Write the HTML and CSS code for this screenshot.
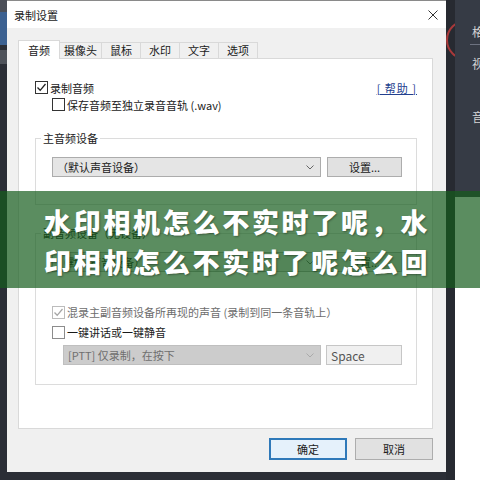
FILE: index.html
```html
<!DOCTYPE html>
<html lang="zh-CN">
<head>
  <meta charset="UTF-8">
  <meta name="viewport" content="width=device-width, initial-scale=1.0">
  <title>录制设置</title>
  <link rel="stylesheet" href="styles.css">
</head>
<body>
  <div class="screen">
    <!-- 左侧背景窗口 -->
    <div class="side-left">
      <div class="sl-top"></div>
      <div class="sl-blue"></div>
      <div class="sl-gray"></div>
    </div>

    <!-- 对话框 -->
    <div class="dialog">
      <div class="titlebar">
        <span>录制设置</span>
        <svg class="close" width="10" height="10" viewBox="0 0 10 10">
          <path d="M0.5 0.5 L9.5 9.5 M9.5 0.5 L0.5 9.5" stroke="#333" stroke-width="1" fill="none"/>
        </svg>
      </div>

      <div class="dlg-body">
        <div class="tabs">
          <div class="tab active">音频</div>
          <div class="tab">摄像头</div>
          <div class="tab">鼠标</div>
          <div class="tab">水印</div>
          <div class="tab">文字</div>
          <div class="tab">选项</div>
        </div>

        <div class="panel">
          <div class="check-row">
            <span class="box">
              <svg width="11" height="11" viewBox="0 0 11 11"><path d="M1.5 5.5 L4.2 8.3 L9.5 2" stroke="#222" stroke-width="1.3" fill="none"/></svg>
            </span>
            <span>录制音频</span>
            <span class="help">[&nbsp;帮助&nbsp;]</span>
          </div>
          <div class="check-row sub">
            <span class="box"></span>
            <span>保存音频至独立录音音轨 (.wav)</span>
          </div>

          <fieldset class="group g1">
            <legend>主音频设备</legend>
            <div class="device-row">
              <div class="select">
                <span>（默认声音设备）</span>
                <svg width="8" height="5" viewBox="0 0 8 5"><path d="M0.5 0.5 L4 4 L7.5 0.5" stroke="#666" fill="none"/></svg>
              </div>
              <div class="btn">设置...</div>
            </div>
          </fieldset>

          <fieldset class="group g2">
            <legend>副音频设备（无设备）</legend>
            <div class="device-row">
              <div class="select">
                <span>（默认声音设备）</span>
                <svg width="8" height="5" viewBox="0 0 8 5"><path d="M0.5 0.5 L4 4 L7.5 0.5" stroke="#666" fill="none"/></svg>
              </div>
              <div class="btn">设置...</div>
            </div>

            <div class="check-row mix">
              <span class="box disabled">
                <svg width="11" height="11" viewBox="0 0 11 11"><path d="M1.5 5.5 L4.2 8.3 L9.5 2" stroke="#a6a6a6" stroke-width="1.3" fill="none"/></svg>
              </span>
              <span class="gray">混录主副音频设备所再现的声音 (录制到同一条音轨上）</span>
            </div>
            <div class="check-row ptt">
              <span class="box soft"></span>
              <span>一键讲话或一键静音</span>
            </div>
            <div class="ptt-row">
              <div class="select off">
                <span>[PTT] 仅录制，在按下</span>
                <svg width="8" height="5" viewBox="0 0 8 5"><path d="M0.5 0.5 L4 4 L7.5 0.5" stroke="#aaa" fill="none"/></svg>
              </div>
              <div class="key-input">Space</div>
            </div>
          </fieldset>
        </div>

        <div class="actions">
          <div class="btn primary">确定</div>
          <div class="btn">取消</div>
        </div>
      </div>
    </div>

    <!-- 右侧背景窗口 -->
    <div class="gap-strip">
      <svg width="9" height="80" viewBox="0 0 9 80">
        <circle cx="20" cy="40" r="19" stroke="#a8393a" stroke-width="2" fill="none"/>
      </svg>
    </div>
    <div class="side-right">
      <div class="dark-panel">
        <div class="dp-item">格</div>
        <div class="dp-line"></div>
        <div class="dp-item">视</div>
        <div class="dp-item last">音</div>
      </div>
    </div>

    <!-- 标题横幅 -->
    <div class="banner">
      <div class="banner-text">水印相机怎么不实时了呢，水印相机怎么不实时了呢怎么回事</div>
    </div>
  </div>
</body>
</html>
```

FILE: styles.css
```css
* {
  box-sizing: border-box;
}

body {
  margin: 0;
  font-family: "Noto Sans CJK SC", "Noto Sans", sans-serif;
  font-size: 11px;
  color: #1a1a1a;
}

.screen {
  position: relative;
  width: 480px;
  height: 480px;
  display: flex;
  background: #2b2e36;
  overflow: hidden;
}

.screen > div {
  flex: none;
  min-width: 0;
}

/* 左侧 */
.side-left {
  width: 7px;
  display: flex;
  flex-direction: column;
}

.sl-top {
  height: 12px;
  background: #4b4f58;
}

.sl-blue {
  height: 33px;
  background: #3c6191;
}

.sl-gray {
  height: 14px;
  margin-top: 5px;
  background: #4e525a;
}

/* 对话框 */
.dialog {
  width: 439px;
  height: 472px;
  display: flex;
  flex-direction: column;
  background: #f0f0f0;
  border-top: 1px solid #8a8a8a;
}

.titlebar {
  height: 27px;
  background: #fff;
  display: flex;
  align-items: center;
  justify-content: space-between;
  padding: 0 8px 0 7px;
}

.dlg-body {
  flex: 1;
  padding: 12px 13px 0 11px;
  display: flex;
  flex-direction: column;
}

.tabs {
  display: flex;
  align-items: flex-end;
  height: 18px;
}

.tab {
  height: 16px;
  min-width: 40px;
  padding: 0 4px;
  margin-right: -1px;
  border: 1px solid #d9d9d9;
  border-bottom: none;
  text-align: center;
  line-height: 15px;
  background: #f0f0f0;
}

.tab.active {
  position: relative;
  z-index: 1;
  height: 19px;
  min-width: 42px;
  margin-bottom: -1px;
  background: #fff;
  line-height: 18px;
}

.panel {
  height: 371px;
  background: #fff;
  border: 1px solid #d9d9d9;
  padding: 20px 15px 0 16px;
}

.check-row {
  display: flex;
  align-items: center;
  height: 17px;
  gap: 2px;
}

.check-row.sub {
  padding-left: 17px;
}

.box {
  width: 13px;
  height: 13px;
  border: 1px solid #333;
  background: #fff;
  display: flex;
  align-items: center;
  justify-content: center;
  flex: none;
}

.box.disabled {
  border-color: #bcbcbc;
}

.box.soft {
  border-color: #8c8c8c;
}

.help {
  margin-left: auto;
  color: #23408e;
  text-decoration: underline;
  letter-spacing: 1px;
}

.gray {
  color: #6d6d6d;
}

.group {
  margin: 17px 0 0;
  padding: 11px 14px 27px 16px;
  border: 1px solid #dcdcdc;
  min-width: 0;
}

.group legend {
  padding: 0 2px;
  margin-left: -11px;
  line-height: 16px;
}

.group.g2 {
  margin-top: 20px;
  padding-bottom: 19px;
}

.device-row,
.ptt-row {
  display: flex;
  gap: 6px;
  height: 20px;
}

.select {
  flex: 1;
  display: flex;
  align-items: center;
  justify-content: space-between;
  padding: 0 6px 0 4px;
  background: #e5e5e5;
  border: 1px solid #acacac;
}

.select.off {
  background: #cccccc;
  border-color: #bfbfbf;
  color: #6f6f6f;
}

.btn {
  width: 75px;
  display: flex;
  align-items: center;
  justify-content: center;
  background: #e1e1e1;
  border: 1px solid #adadad;
}

.check-row.mix {
  margin-top: 30px;
  height: 20px;
}

.check-row.ptt {
  height: 20px;
}

.ptt-row {
  margin-top: 3px;
  margin-left: 11px;
  gap: 5px;
}

.key-input {
  width: 76px;
  display: flex;
  align-items: center;
  padding-left: 4px;
  background: #f0f0f0;
  border: 1px solid #c6c6c6;
  color: #555;
  font-size: 12px;
}

.actions {
  display: flex;
  justify-content: flex-end;
  gap: 8px;
  margin-top: 9px;
}

.actions .btn {
  width: 78px;
  height: 22px;
}

.actions .btn.primary {
  background: #e5f1fb;
  border: 2px solid #2f79b9;
}

/* 右侧 */
.gap-strip {
  width: 9px;
  background: #272a31;
  overflow: hidden;
}

.gap-strip svg {
  display: block;
}

.side-right {
  width: 25px;
  background: #fff;
  overflow: hidden;
}

.dark-panel {
  height: 197px;
  background: #363b45;
  padding: 24px 0 0 17px;
  color: #d6d6d6;
  font-size: 12px;
}

.dp-item {
  line-height: 16px;
}

.dp-line {
  height: 1px;
  margin: 4px 0 11px -2px;
  background: #6d7280;
}

.dp-item.last {
  margin-top: 37px;
}

/* 横幅 */
.banner {
  position: absolute;
  left: 0;
  top: 191px;
  width: 480px;
  height: 97px;
  background: rgba(21, 92, 28, 0.7);
  display: flex;
  justify-content: center;
  padding-top: 1px;
}

.banner-text {
  width: 392px;
  height: 80px;
  margin-top: 10px;
  overflow: hidden;
  color: #fff;
  font-size: 27px;
  font-weight: 900;
  letter-spacing: 2.7px;
  line-height: 40px;
  text-shadow: 1px 1px 2px rgba(0, 0, 0, 0.35);
}
```
